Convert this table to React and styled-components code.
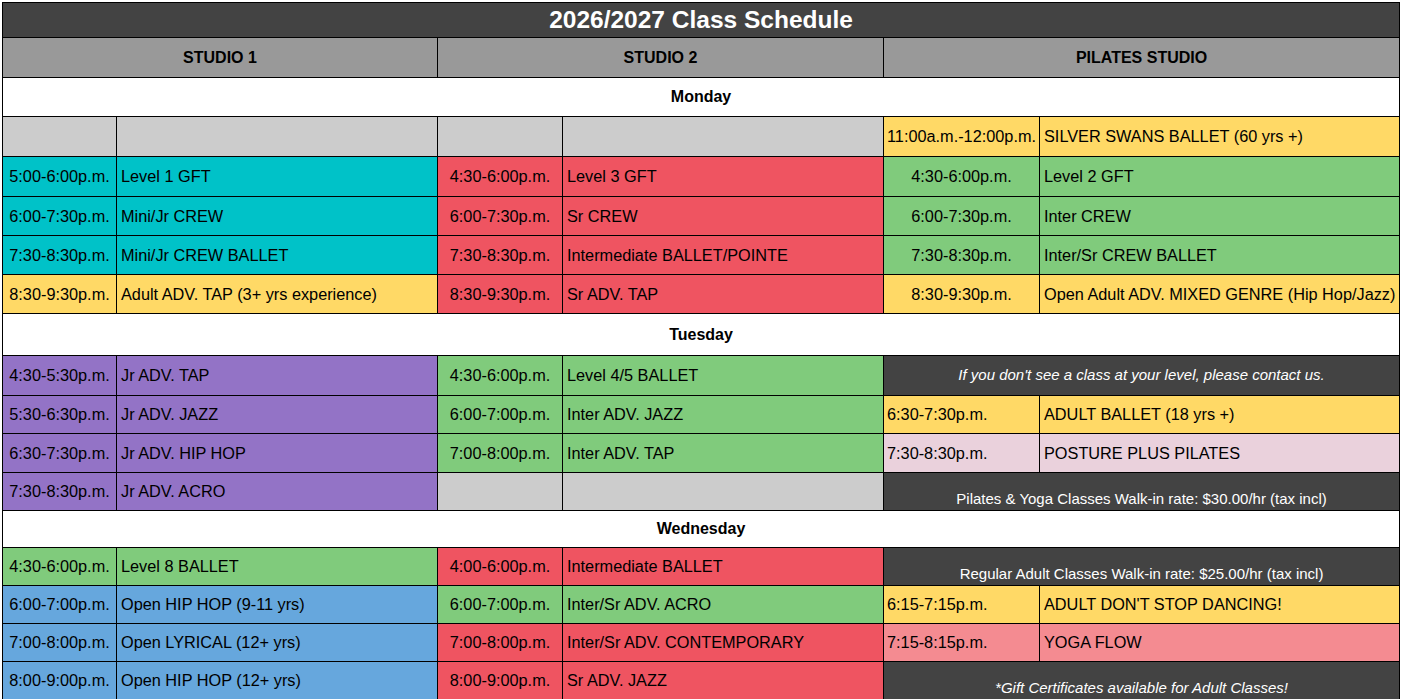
import React from "react";
import styled, {createGlobalStyle} from "styled-components";

const GlobalStyle = createGlobalStyle`
  html, body {
    margin: 0;
    padding: 0;
    background: #ffffff;
  }
`;

const C = {
  cyan: "#00c2c8",
  red: "#ef5461",
  green: "#80cb7c",
  yellow: "#ffd966",
  purple: "#9373c6",
  blue: "#66a7dd",
  pink: "#ead1dc",
  salmon: "#f48b91",
  gray: "#cccccc",
  dark: "#434343",
};

// each row: [studio1, studio2, pilates] -> null = empty gray, {note} = merged dark cell
const schedule = [
  {
    day: "Monday",
    h: 39,
    rows: [
      {h: 40, cells: [null, null, {t: "11:00a.m.-12:00p.m.", n: "SILVER SWANS BALLET (60 yrs +)", c: C.yellow}]},
      {h: 40, cells: [
        {t: "5:00-6:00p.m.", n: "Level 1 GFT", c: C.cyan},
        {t: "4:30-6:00p.m.", n: "Level 3 GFT", c: C.red},
        {t: "4:30-6:00p.m.", n: "Level 2 GFT", c: C.green},
      ]},
      {h: 39, cells: [
        {t: "6:00-7:30p.m.", n: "Mini/Jr CREW", c: C.cyan},
        {t: "6:00-7:30p.m.", n: "Sr CREW", c: C.red},
        {t: "6:00-7:30p.m.", n: "Inter CREW", c: C.green},
      ]},
      {h: 39, cells: [
        {t: "7:30-8:30p.m.", n: "Mini/Jr CREW BALLET", c: C.cyan},
        {t: "7:30-8:30p.m.", n: "Intermediate BALLET/POINTE", c: C.red},
        {t: "7:30-8:30p.m.", n: "Inter/Sr CREW BALLET", c: C.green},
      ]},
      {h: 39, cells: [
        {t: "8:30-9:30p.m.", n: "Adult ADV. TAP (3+ yrs experience)", c: C.yellow},
        {t: "8:30-9:30p.m.", n: "Sr ADV. TAP", c: C.red},
        {t: "8:30-9:30p.m.", n: "Open Adult ADV. MIXED GENRE (Hip Hop/Jazz)", c: C.yellow},
      ]},
    ],
  },
  {
    day: "Tuesday",
    h: 42,
    rows: [
      {h: 40, cells: [
        {t: "4:30-5:30p.m.", n: "Jr ADV. TAP", c: C.purple},
        {t: "4:30-6:00p.m.", n: "Level 4/5 BALLET", c: C.green},
        {note: "If you don't see a class at your level, please contact us.", italic: true, middle: true},
      ]},
      {h: 38, cells: [
        {t: "5:30-6:30p.m.", n: "Jr ADV. JAZZ", c: C.purple},
        {t: "6:00-7:00p.m.", n: "Inter ADV. JAZZ", c: C.green},
        {t: "6:30-7:30p.m.", n: "ADULT BALLET (18 yrs +)", c: C.yellow, left: true},
      ]},
      {h: 39, cells: [
        {t: "6:30-7:30p.m.", n: "Jr ADV. HIP HOP", c: C.purple},
        {t: "7:00-8:00p.m.", n: "Inter ADV. TAP", c: C.green},
        {t: "7:30-8:30p.m.", n: "POSTURE PLUS PILATES", c: C.pink, left: true},
      ]},
      {h: 38, cells: [
        {t: "7:30-8:30p.m.", n: "Jr ADV. ACRO", c: C.purple},
        null,
        {note: "Pilates & Yoga Classes Walk-in rate: $30.00/hr (tax incl)"},
      ]},
    ],
  },
  {
    day: "Wednesday",
    h: 37,
    rows: [
      {h: 38, cells: [
        {t: "4:30-6:00p.m.", n: "Level 8 BALLET", c: C.green},
        {t: "4:00-6:00p.m.", n: "Intermediate BALLET", c: C.red},
        {note: "Regular Adult Classes Walk-in rate: $25.00/hr (tax incl)"},
      ]},
      {h: 38, cells: [
        {t: "6:00-7:00p.m.", n: "Open HIP HOP (9-11 yrs)", c: C.blue},
        {t: "6:00-7:00p.m.", n: "Inter/Sr ADV. ACRO", c: C.green},
        {t: "6:15-7:15p.m.", n: "ADULT DON'T STOP DANCING!", c: C.yellow, left: true},
      ]},
      {h: 38, cells: [
        {t: "7:00-8:00p.m.", n: "Open LYRICAL (12+ yrs)", c: C.blue},
        {t: "7:00-8:00p.m.", n: "Inter/Sr ADV. CONTEMPORARY", c: C.red},
        {t: "7:15-8:15p.m.", n: "YOGA FLOW", c: C.salmon, left: true},
      ]},
      {h: 38, cells: [
        {t: "8:00-9:00p.m.", n: "Open HIP HOP (12+ yrs)", c: C.blue},
        {t: "8:00-9:00p.m.", n: "Sr ADV. JAZZ", c: C.red},
        {note: "*Gift Certificates available for Adult Classes!", italic: true},
      ]},
    ],
  },
];

function App() {
  return (
    <Page>
      <GlobalStyle />
      <Sheet>
        <colgroup>
          <col style={{width: 114}} />
          <col style={{width: 321}} />
          <col style={{width: 125}} />
          <col style={{width: 321}} />
          <col style={{width: 156}} />
          <col style={{width: 360}} />
        </colgroup>
        <tbody>
          <Row $h={35}>
            <TitleCell colSpan={6}>2026/2027 Class Schedule</TitleCell>
          </Row>
          <Row $h={40}>
            <HeadCell colSpan={2}>STUDIO 1</HeadCell>
            <HeadCell colSpan={2}>STUDIO 2</HeadCell>
            <HeadCell colSpan={2}>PILATES STUDIO</HeadCell>
          </Row>
          {schedule.map((section) => (
            <React.Fragment key={section.day}>
              <Row $h={section.h}>
                <DayCell colSpan={6}>{section.day}</DayCell>
              </Row>
              {section.rows.map((row, i) => (
                <Row $h={row.h} key={i}>
                  {row.cells.map((cell, j) => {
                    if (!cell) {
                      return (
                        <React.Fragment key={j}>
                          <EmptyCell />
                          <EmptyCell />
                        </React.Fragment>
                      );
                    }
                    if (cell.note) {
                      return (
                        <NoteCell
                          key={j}
                          colSpan={2}
                          $italic={cell.italic}
                          $middle={cell.middle}
                        >
                          {cell.note}
                        </NoteCell>
                      );
                    }
                    return (
                      <React.Fragment key={j}>
                        <TimeCell $bg={cell.c} $left={cell.left}>
                          {cell.t}
                        </TimeCell>
                        <NameCell $bg={cell.c}>{cell.n}</NameCell>
                      </React.Fragment>
                    );
                  })}
                </Row>
              ))}
            </React.Fragment>
          ))}
        </tbody>
      </Sheet>
    </Page>
  );
}

const Page = styled.div`
  padding: 2px 0 0 2px;
`;

const Sheet = styled.table`
  border-collapse: collapse;
  table-layout: fixed;
  width: 1398px;
  font-family: "Liberation Sans", Arial, sans-serif;
  font-size: 16px;
  color: #000;
  td,
  th {
    border: 1px solid #000;
    padding: 0;
    white-space: nowrap;
    overflow: hidden;
  }
`;

const Row = styled.tr`
  height: ${(p) => p.$h}px;
`;

const TitleCell = styled.td`
  background: ${C.dark};
  color: #fff;
  font-size: 24.5px;
  font-weight: 700;
  text-align: center;
`;

const HeadCell = styled.th`
  background: #999999;
  font-size: 16px;
  font-weight: 700;
  text-align: center;
`;

const DayCell = styled.td`
  background: #fff;
  font-weight: 700;
  text-align: center;
`;

const EmptyCell = styled.td`
  background: ${C.gray};
`;

const TimeCell = styled.td`
  background: ${(p) => p.$bg};
  font-size: 16.3px;
  text-align: ${(p) => (p.$left ? "left" : "center")};
  td& {
    padding: 0 3px;
  }
`;

const NameCell = styled.td`
  background: ${(p) => p.$bg};
  font-size: 16.3px;
  text-align: left;
  td& {
    padding: 0 4px;
  }
`;

const NoteCell = styled.td`
  background: ${C.dark};
  color: #fff;
  font-size: 15px;
  font-style: ${(p) => (p.$italic ? "italic" : "normal")};
  text-align: center;
  vertical-align: ${(p) => (p.$middle ? "middle" : "bottom")};
  td& {
    padding: 0 3px 3px;
  }
`;

export default App;
